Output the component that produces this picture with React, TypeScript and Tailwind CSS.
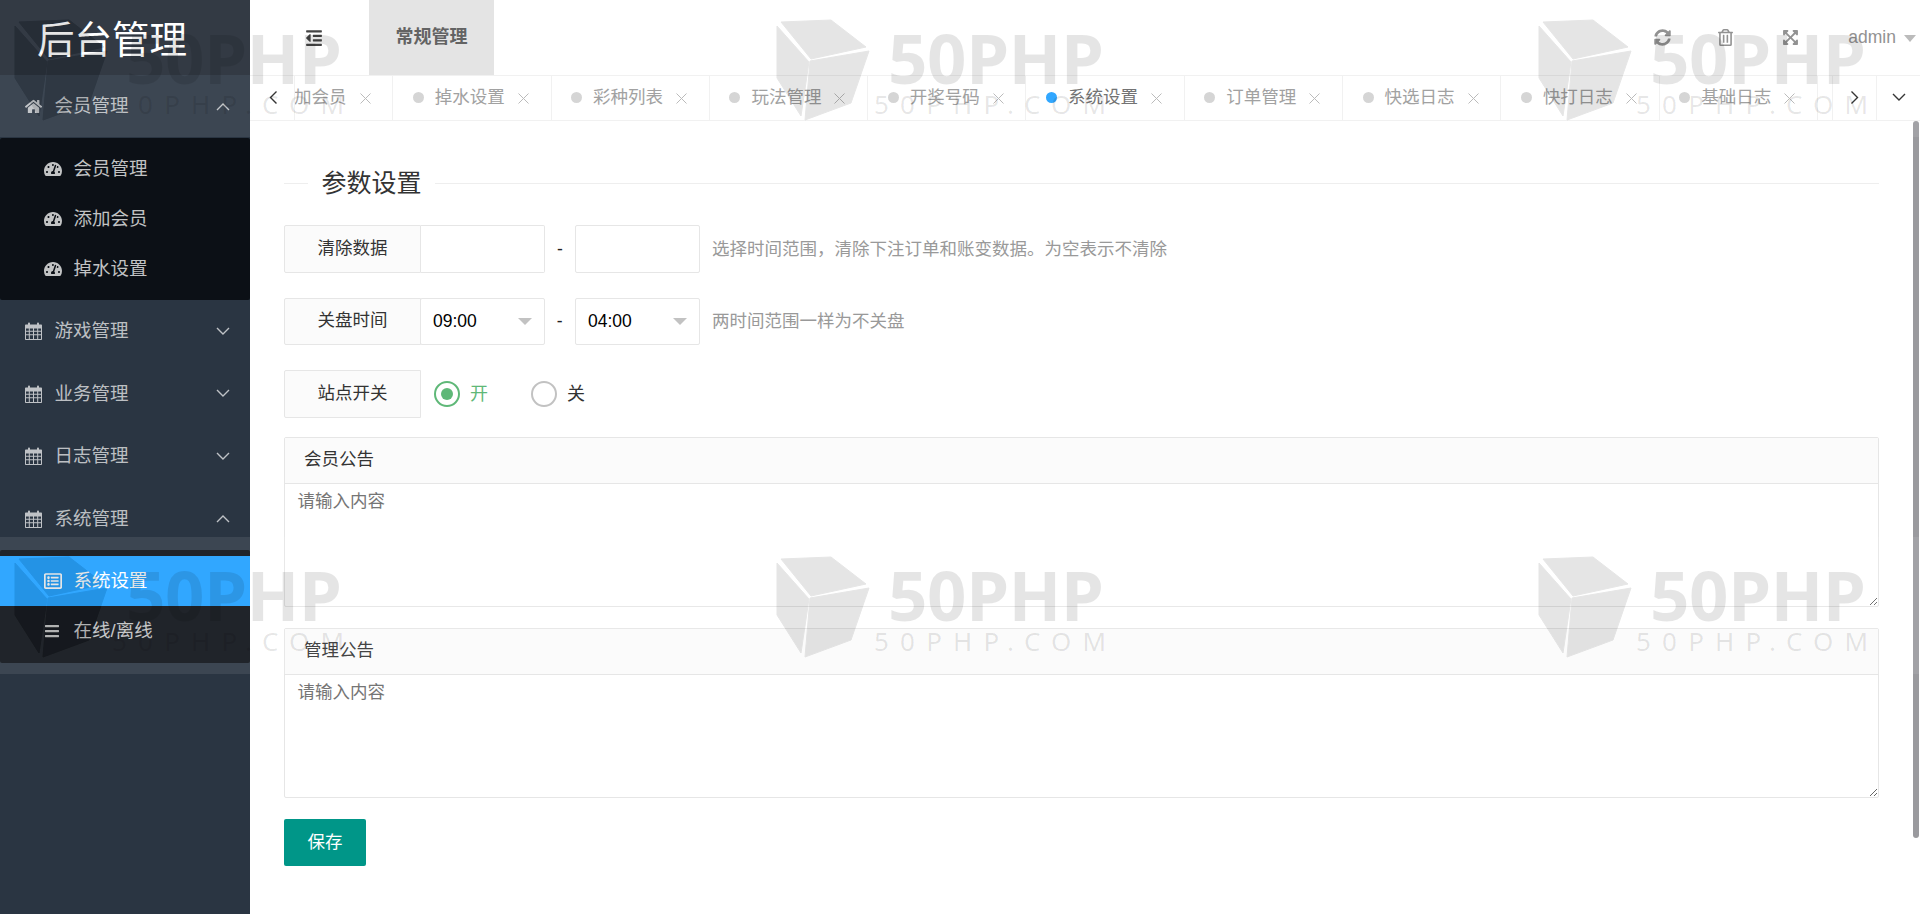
import React from 'react';
import { FaHome, FaTachometerAlt, FaRegListAlt, FaBars, FaSyncAlt, FaRegTrashAlt, FaExpandArrowsAlt, FaOutdent } from 'react-icons/fa';

const FACES = ['19,22 69,20 104,47 49,59', '15,26 47,62 39,116 15,78', '107,51 89,103 43,120 48,61'];

function Calendar() {
  return (
    <svg width="17" height="18" viewBox="0 0 17 18" className="shrink-0" fill="currentColor">
      <path fillRule="evenodd" d="M1 2.5h2V1.6C3 .8 3.5.4 4 .4s1 .4 1 1.2v.9h7v-.9c0-.8.5-1.2 1-1.2s1 .4 1 1.2v.9h2c.6 0 1 .4 1 1V17c0 .6-.4 1-1 1H1c-.6 0-1-.4-1-1V3.500c0-.6.4-1 1-1zM1 6.500v2.300h2.800V6.500zm3.800 0v2.300h3.200V6.500zm4.200 0v2.300h3.200V6.500zm4.200 0v2.300H16V6.500zM1 9.800v2.400h2.800V9.800zm3.800 0v2.400h3.200V9.800zm4.200 0v2.400h3.200V9.800zm4.200 0v2.400H16V9.800zM1 13.200V17h2.800v-3.800zm3.800 0V17h3.200v-3.800zm4.200 0V17h3.200v-3.800zm4.200 0V17H16v-3.800z" />
    </svg>
  );
}

function Chevron({ up, className }: { up?: boolean; className?: string }) {
  return (
    <svg width="14" height="9" viewBox="0 0 14 9" fill="none" stroke="currentColor" strokeWidth="1.4" className={className}>
      {up ? <path d="M1 8l6-6 6 6" /> : <path d="M1 1l6 6 6-6" />}
    </svg>
  );
}

function NavRow({ icon, label, open }: { icon: React.ReactNode; label: string; open?: boolean }) {
  return (
    <div className="h-[62.5px] flex items-center pl-[25px] pr-[20px] text-white/70 text-[18.5px]">
      <span className="w-[29.500px] flex items-center">{icon}</span>
      <span className="flex-1">{label}</span>
      <Chevron up={open} />
    </div>
  );
}

function SubRow({ icon, label, active }: { icon: React.ReactNode; label: string; active?: boolean }) {
  return (
    <div className={`h-[50px] flex items-center pl-[44px] text-[18.5px] ${active ? 'bg-[#1e9fff] text-white' : 'text-white/75'}`}>
      <span className="w-[29.500px] flex items-center">{icon}</span>
      <span>{label}</span>
    </div>
  );
}

function Sidebar() {
  const dash = <FaTachometerAlt size={18} />;
  return (
    <aside className="w-[250px] shrink-0 bg-[#2a3542] flex flex-col">
      <div className="h-[75px] bg-[#202833] flex items-center pl-[37px] pt-[5px] text-white text-[37.5px]">后台管理</div>
      <NavRow icon={<FaHome size={17} />} label="会员管理" open />
      <div className="bg-[#0c1016] rounded-[2px] py-[6.25px]">
        <SubRow icon={dash} label="会员管理" />
        <SubRow icon={dash} label="添加会员" />
        <SubRow icon={dash} label="掉水设置" />
      </div>
      <NavRow icon={<Calendar />} label="游戏管理" />
      <NavRow icon={<Calendar />} label="业务管理" />
      <NavRow icon={<Calendar />} label="日志管理" />
      <NavRow icon={<Calendar />} label="系统管理" open />
      <div className="bg-[#0c1016] rounded-[2px] py-[6.25px]">
        <SubRow icon={<FaRegListAlt size={18} />} label="系统设置" active />
        <SubRow icon={<FaBars size={16} />} label="在线/离线" />
      </div>
    </aside>
  );
}

function Header() {
  return (
    <header className="h-[75px] shrink-0 flex items-stretch text-[#888]">
      <div className="w-[119px] flex items-center pl-[55px] text-[#333]">
        <FaOutdent size={18} />
      </div>
      <div className="w-[125px] bg-[#e2e2e2] flex items-center justify-center text-[#555] text-[18px] font-bold">常规管理</div>
      <div className="flex-1" />
      <div className="flex items-center pr-[4px]">
        <span className="w-[63px] flex justify-center text-[#888]"><FaSyncAlt size={17} /></span>
        <span className="w-[63px] flex justify-center text-[#888]"><FaRegTrashAlt size={17} /></span>
        <span className="w-[66px] flex justify-center text-[#888]"><FaExpandArrowsAlt size={17} /></span>
        <span className="ml-[25px] text-[17.500px]">admin</span>
        <span className="ml-[8px] mt-[1px] w-0 h-0 border-x-[6.5px] border-x-transparent border-t-[7px] border-t-[#b5b5b5]" />
      </div>
    </header>
  );
}

const TABS = ['添加会员', '掉水设置', '彩种列表', '玩法管理', '开奖号码', '系统设置', '订单管理', '快选日志', '快打日志', '基础日志'];

function Tabs() {
  return (
    <div className="h-[46px] shrink-0 flex border-y border-[#f0f0f0] bg-white">
      <div className="w-[45px] shrink-0 border-r border-[#f0f0f0] flex items-center justify-center text-[#222] pb-[1px]">
        <Chevron up className="-rotate-90 ml-[1px]" />
      </div>
      <div className="flex-1 overflow-hidden">
        <div className="flex h-full -ml-[60px] w-[2000px]">
          {TABS.map((t, i) => (
            <div key={t} className="w-[158.300px] shrink-0 border-r border-[#f0f0f0] flex items-center pl-[19.500px] pb-[2px] text-[17.5px]">
              <span className={`w-[11px] h-[11px] rounded-full shrink-0 ${i === 5 ? 'bg-[#1e9fff]' : 'bg-[#d2d2d2]'}`} />
              <span className={`ml-[11px] ${i === 5 ? 'text-[#666]' : 'text-[#999]'}`}>{t}</span>
              <svg width="11" height="11" viewBox="0 0 11 11" className="ml-[13px] mt-[2px] text-[#b5b5b5]" stroke="currentColor" strokeWidth="1"><path d="M.5.5l10 10M10.500.5l-10 10" /></svg>
            </div>
          ))}
        </div>
      </div>
      <div className="w-[45px] shrink-0 border-x border-[#f0f0f0] flex items-center justify-center text-[#222] pb-[1px]">
        <Chevron className="-rotate-90" />
      </div>
      <div className="w-[43px] shrink-0 flex items-center justify-center text-[#222] pb-[1px]">
        <Chevron className="ml-[1px]" />
      </div>
    </div>
  );
}

function Label({ children }: { children: React.ReactNode }) {
  return (
    <div className="w-[137px] h-[47.5px] shrink-0 border border-[#e6e6e6] bg-[#fbfbfb] rounded-l-[2px] flex items-center justify-center text-[17.5px] text-[#333] pb-[2px]">
      {children}
    </div>
  );
}

function Select({ value }: { value: string }) {
  return (
    <div className="w-[124.500px] h-[47.5px] border border-[#e6e6e6] rounded-[2px] bg-white flex items-center justify-between pl-[12px] pr-[12px] text-[17.5px] text-black">
      <span>{value}</span>
      <span className="w-0 h-0 border-x-[7px] border-x-transparent border-t-[7px] border-t-[#c2c2c2] mt-[1px]" />
    </div>
  );
}

function Editor({ title, className }: { title: string; className?: string }) {
  return (
    <div className={`border border-[#e6e6e6] rounded-[2px] flex flex-col ${className ?? ''}`}>
      <div className="h-[46px] shrink-0 bg-[#fbfbfb] border-b border-[#e6e6e6] pl-[19px] pb-[1px] flex items-center text-[17.5px] text-[#333]">{title}</div>
      <textarea placeholder="请输入内容" className="block w-full h-[122px] px-[12.5px] py-[5px] text-[17.5px] leading-[24px] bg-transparent outline-none placeholder:text-[#757575]" />
    </div>
  );
}

function Content() {
  return (
    <div className="flex-1 flex min-h-0">
      <main className="flex-1 pl-[34px] pr-[34px] pt-[62px]">
        <div className="flex items-center h-0">
          <span className="w-[24px] h-px bg-[#eeeeee]" />
          <span className="text-[25px] text-[#333] leading-none px-[13.5px]">参数设置</span>
          <span className="flex-1 h-px bg-[#eeeeee]" />
        </div>
        <div className="mt-[42px] flex items-center">
          <Label>清除数据</Label>
          <input className="w-[124px] h-[47.5px] border border-l-0 border-[#e6e6e6] rounded-r-[2px] outline-none" />
          <span className="w-[30px] text-center text-[17.5px] text-[#222]">-</span>
          <input className="w-[124.500px] h-[47.5px] border border-[#e6e6e6] rounded-[2px] outline-none" />
          <span className="ml-[12.500px] text-[17.5px] text-[#999]">选择时间范围，清除下注订单和账变数据。为空表示不清除</span>
        </div>
        <div className="mt-[25px] flex items-center">
          <Label>关盘时间</Label>
          <div className="-ml-px"><Select value="09:00" /></div>
          <span className="w-[30.500px] text-center text-[17.5px] text-[#222]">-</span>
          <Select value="04:00" />
          <span className="ml-[12.500px] text-[17.5px] text-[#999]">两时间范围一样为不关盘</span>
        </div>
        <div className="mt-[25px] flex items-center">
          <Label>站点开关</Label>
          <span className="ml-[13px] w-[26px] h-[26px] rounded-full border-[2px] border-[#5fb878] flex items-center justify-center">
            <span className="w-[12px] h-[12px] rounded-full bg-[#5fb878]" />
          </span>
          <span className="ml-[10px] mt-[2px] text-[18px] text-[#5fb878]">开</span>
          <span className="ml-[43px] w-[26px] h-[26px] rounded-full border-[2px] border-[#c2c2c2]" />
          <span className="ml-[10px] mt-[2px] text-[18px] text-[#333]">关</span>
        </div>
        <Editor title="会员公告" className="mt-[19px]" />
        <Editor title="管理公告" className="mt-[21px]" />
        <button className="mt-[21px] w-[82px] h-[47.5px] bg-[#009688] rounded-[2px] text-white text-[17.5px]">保存</button>
      </main>
      <div className="w-[7px] shrink-0 pr-[1px]">
        <div className="h-[717px] bg-[#9a9a9e] rounded-[3px]" />
      </div>
    </div>
  );
}

function WatermarkTile({ id }: { id: number }) {
  return (
    <div className="relative w-[762px] h-[537px] shrink-0">
      <svg width="762" height="137" viewBox="0 0 762 137" className="absolute left-0 top-0">
        <defs>
          <mask id={`wm-mask-${id}`}>
            <rect width="762" height="137" fill="#fff" />
            {FACES.map((p) => <polygon key={p} points={p} fill="#000" stroke="#000" strokeWidth="1" strokeLinejoin="round" />)}
          </mask>
        </defs>
        <rect width="762" height="137" fill="#fff" fillOpacity="0.086" mask={`url(#wm-mask-${id})`} />
        <g opacity="0.14">
          {FACES.map((p) => <polygon key={p} points={p} fill="#4e4e4e" stroke="#4e4e4e" strokeWidth="1" strokeLinejoin="round" />)}
        </g>
      </svg>
      <div className="absolute left-[126px] top-[17px] text-[69px] leading-[80px] font-bold font-['Noto_Sans',sans-serif] text-black/10 tracking-[-0.4px] whitespace-nowrap">50PHP</div>
      <div className="absolute left-[112px] top-[88px] text-[26px] leading-[32px] font-['Noto_Sans',sans-serif] text-black/10 tracking-[11.2px] whitespace-nowrap">50PHP.COM</div>
    </div>
  );
}

export default function App() {
  return (
    <div className="relative h-screen w-full overflow-hidden flex bg-white font-['Liberation_Sans','Noto_Sans_CJK_SC',sans-serif]">
      <Sidebar />
      <div className="flex-1 min-w-0 flex flex-col">
        <Header />
        <Tabs />
        <Content />
      </div>
      <div className="absolute inset-0 overflow-hidden pointer-events-none">
        <div className="flex flex-wrap w-[2286px]">
          {[0, 1, 2, 3, 4, 5].map((i) => <WatermarkTile key={i} id={i} />)}
        </div>
      </div>
    </div>
  );
}
